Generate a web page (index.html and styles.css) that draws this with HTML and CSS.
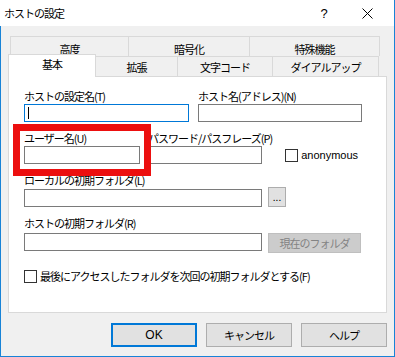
FILE: index.html
```html
<!DOCTYPE html>
<html lang="ja">
<head>
    <meta charset="UTF-8" />
    <title>ホストの設定</title>
    <link rel="stylesheet" href="styles.css">
</head>
<body>
<div class="dialog">
    <div class="dialog__title">
        <span class="dialog__caption">ホストの設定</span>
        <span class="dialog__help">?</span>
        <span class="dialog__close">
            <svg width="11" height="11" viewBox="0 0 11 11"><path d="M0.5 0.5 L10.5 10.5 M10.5 0.5 L0.5 10.5" stroke="#000" stroke-width="1" fill="none"/></svg>
        </span>
    </div>

    <div class="dialog__body">
        <div class="tabs tabs--back">
            <div class="tab" style="width:119px">高度</div>
            <div class="tab" style="width:122px">暗号化</div>
            <div class="tab" style="width:131px">特殊機能</div>
        </div>
        <div class="tabs tabs--front">
            <div class="tab tab--active" style="width:88px">基本</div>
            <div class="tab" style="width:83px">拡張</div>
            <div class="tab" style="width:96px">文字コード</div>
            <div class="tab" style="width:107px">ダイアルアップ</div>
        </div>

        <div class="panel">
            <div class="row">
                <div class="field">
                    <label>ホストの設定名(T)</label>
                    <div class="input input--focus" style="width:165px"><span class="caret"></span></div>
                </div>
                <div class="field field--col2">
                    <label>ホスト名(アドレス)(N)</label>
                    <div class="input" style="width:164px"></div>
                </div>
            </div>

            <div class="row">
                <div class="field">
                    <label>ユーザー名(U)</label>
                    <div class="input" style="width:116px"></div>
                </div>
                <div class="field field--pass">
                    <label>パスワード/パスフレーズ(P)</label>
                    <div class="input" style="width:114px"></div>
                </div>
                <div class="check check--anon">
                    <span class="check__box"></span>
                    <span class="check__text">anonymous</span>
                </div>
            </div>

            <div class="row">
                <div class="field">
                    <label>ローカルの初期フォルダ(L)</label>
                    <div class="field__line">
                        <div class="input" style="width:238px"></div>
                        <div class="btn btn--small">...</div>
                    </div>
                </div>
            </div>

            <div class="row row--tight">
                <div class="field">
                    <label>ホストの初期フォルダ(R)</label>
                    <div class="field__line">
                        <div class="input" style="width:238px"></div>
                        <div class="btn btn--disabled">現在のフォルダ</div>
                    </div>
                </div>
            </div>

            <div class="check check--last">
                <span class="check__box"></span>
                <span class="check__text">最後にアクセスしたフォルダを次回の初期フォルダとする(F)</span>
            </div>

            <div class="highlight"></div>
        </div>

        <div class="buttons">
            <div class="btn btn--default">OK</div>
            <div class="btn">キャンセル</div>
            <div class="btn">ヘルプ</div>
        </div>
    </div>
</div>
</body>
</html>
```

FILE: styles.css
```css
*,
*::before,
*::after {
    box-sizing: border-box;
}

html,
body {
    margin: 0;
    padding: 0;
}

body {
    font-family: "Noto Sans CJK JP", "Noto Sans", sans-serif;
    font-size: 11px;
    letter-spacing: -1px;
    color: #000;
    background: #fff;
}

.dialog {
    width: 395px;
    height: 357px;
    display: flex;
    flex-direction: column;
    border-right: 1px solid #1883d7;
    border-bottom: 1px solid #1883d7;
}

.dialog__title {
    height: 26px;
    display: flex;
    align-items: center;
    background: #fff;
}
.dialog__caption {
    margin-left: 4px;
    font-size: 11px;
    line-height: 16px;
    flex: 1;
}
.dialog__help {
    width: 10px;
    margin-right: 33px;
    font-family: "Liberation Sans", sans-serif;
    font-size: 13px;
    letter-spacing: 0;
    text-align: center;
}
.dialog__close {
    display: flex;
    margin-right: 21px;
}

.dialog__body {
    flex: 1;
    background: #f0f0f0;
    border-left: 1px solid #1883d7;
    padding-top: 10px;
    position: relative;
}

.tabs {
    display: flex;
}
.tabs--back {
    margin-left: 9px;
    height: 20px;
}
.tabs--front {
    margin-left: 7px;
    height: 20px;
    align-items: flex-end;
    position: relative;
    z-index: 2;
}
.tab {
    height: 20px;
    border: 1px solid #d9d9d9;
    border-bottom: none;
    margin-right: -1px;
    background: #f0f0f0;
    text-align: center;
    line-height: 19px;
    padding-top: 1px;
}
.tabs--back .tab {
    line-height: 20px;
    padding-top: 2px;
}
.tab--active {
    height: 23px;
    margin-bottom: -1px;
    background: #fff;
    border-color: #d9d9d9;
    padding-top: 0;
    line-height: 18px;
    position: relative;
    z-index: 1;
}

.panel {
    position: relative;
    margin-left: 7px;
    width: 379px;
    height: 237px;
    background: #fff;
    border: 1px solid #d9d9d9;
    padding: 11px 0 0 15px;
}

.row {
    display: flex;
    align-items: flex-end;
    margin-bottom: 8px;
}
.row--tight {
    margin-bottom: 15px;
}
.field {
    display: flex;
    flex-direction: column;
}
.field label {
    line-height: 16px;
    height: 16px;
    white-space: nowrap;
}
.field--col2 {
    margin-left: 9px;
}
.field--pass {
    margin-left: 8px;
}
.field__line {
    display: flex;
    align-items: center;
}

.input {
    height: 18px;
    border: 1px solid #7a7a7a;
    background: #fff;
    position: relative;
}
.input--focus {
    border-color: #0078d7;
}
.caret {
    position: absolute;
    left: 3px;
    top: 2px;
    width: 1px;
    height: 12px;
    background: #000;
}

.check {
    display: flex;
    align-items: center;
}
.check__box {
    width: 13px;
    height: 13px;
    border: 1px solid #333;
    background: #fff;
}
.check__text {
    margin-left: 3px;
    line-height: 16px;
    white-space: nowrap;
}
.check--anon {
    margin-left: 13px;
    margin-bottom: 1px;
}
.check--anon .check__text {
    font-family: "Liberation Sans", sans-serif;
    font-size: 11px;
    letter-spacing: 0;
}

.btn {
    display: flex;
    align-items: center;
    justify-content: center;
    width: 86px;
    height: 24px;
    background: #e1e1e1;
    border: 1px solid #adadad;
    white-space: nowrap;
}
.btn--small {
    width: 18px;
    height: 20px;
    margin-left: 6px;
    margin-top: -1px;
    font-size: 10px;
    line-height: 10px;
    letter-spacing: 0;
}
.btn--disabled {
    width: 93px;
    height: 20px;
    margin-left: 6px;
    margin-top: 2px;
    background: #cccccc;
    border-color: #bfbfbf;
    color: #838383;
}
.btn--default {
    border: 2px solid #0078d7;
    font-family: "Liberation Sans", sans-serif;
    font-size: 12px;
    letter-spacing: 0;
}

.buttons {
    display: flex;
    justify-content: flex-end;
    gap: 9px;
    margin-top: 10px;
    margin-right: 7px;
}
.buttons .btn {
    width: 86px;
}

.highlight {
    position: absolute;
    left: 4px;
    top: 47px;
    width: 138px;
    height: 52px;
    border: 7px solid #ec0f0f;
}
```
